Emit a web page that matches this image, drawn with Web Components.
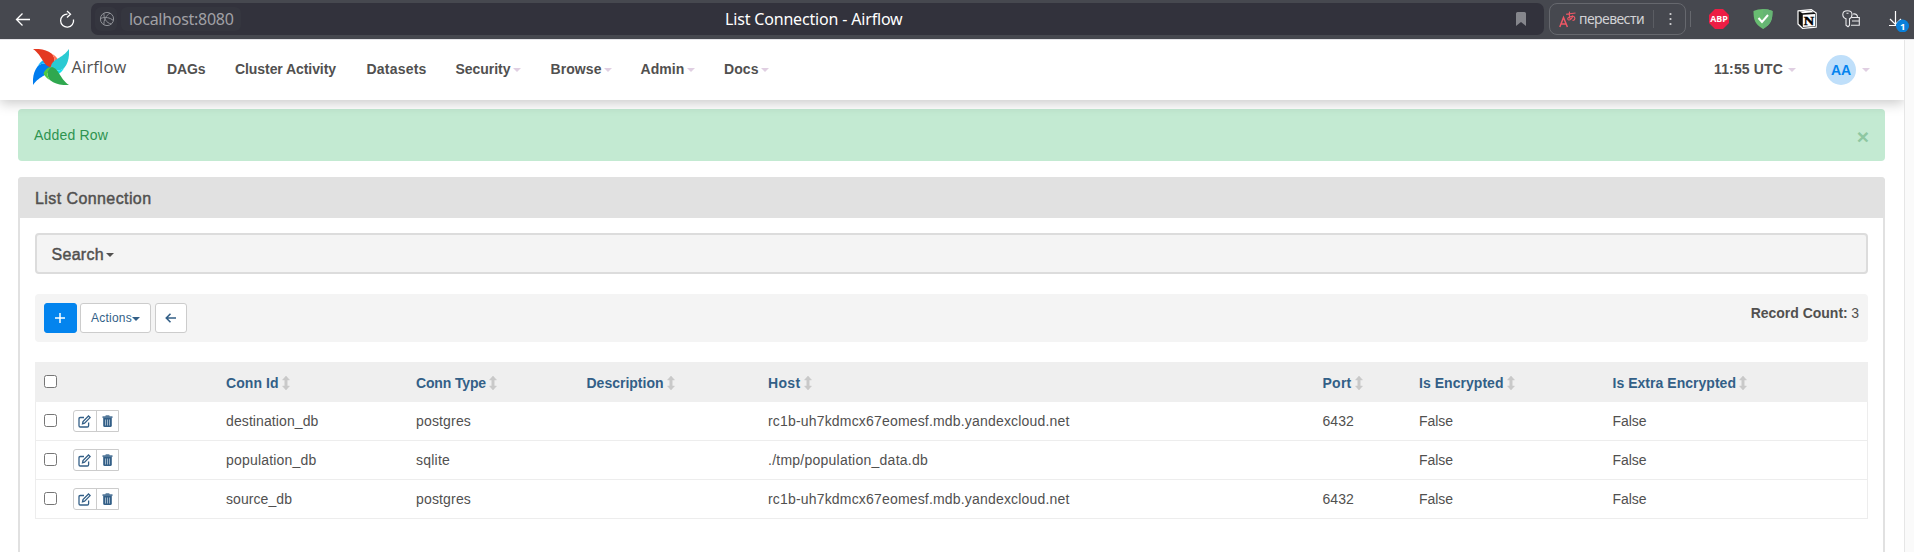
<!DOCTYPE html>
<html lang="en">
<head>
<meta charset="utf-8">
<title>List Connection - Airflow</title>
<style>
html,body{margin:0;height:100%;overflow:hidden;background:#fff}
body{font:14px/20px "Liberation Sans",Arial,sans-serif;color:#51504f}
</style>
</head>
<body>
<airflow-page></airflow-page>
<script>
const define = (name, html, setup) => {
  const t = document.createElement('template');
  t.innerHTML = html;
  customElements.define(name, class extends HTMLElement {
    connectedCallback() {
      if (this.shadowRoot) return;
      this.attachShadow({mode: 'open'}).append(t.content.cloneNode(true));
      if (setup) setup.call(this, this.shadowRoot);
    }
  });
};

/* Single-line text whose tracking is spread over a given width (attribute w). */
define('fit-text', `<style>:host{display:inline-block;white-space:nowrap;flex:none}span{display:inline-block}</style><span><slot></slot></span>`, function (r) {
  const w = +this.getAttribute('w'), s = r.querySelector('span');
  const n = this.textContent.length;
  if (!w || !n) return;
  s.style.letterSpacing = (w - s.getBoundingClientRect().width) / n + 'px';
  this.style.width = w + 'px';
});

define('caret-down', `<style>:host{display:block;flex:none;width:0;height:0;border:4px solid transparent;border-top-color:var(--caret,#e0cfe2);border-bottom:0}</style>`);

define('sort-icon', `<style>:host{display:block;flex:none}svg{display:block}</style>
<svg width="8" height="14" viewBox="0 0 8 14"><path d="M4 0 7.500 4H5.200v6h2.300L4 14 .5 10H2.800V4H.5z" fill="#c9c9c9" stroke="#c9c9c9" stroke-width=".5" stroke-linejoin="round"/></svg>`);

define('nav-item', `<style>:host{display:flex;align-items:center;flex:none}caret-down{margin-left:2.500px;margin-top:2px}:host(:not([menu])) caret-down{display:none}</style>
<slot></slot><caret-down></caret-down>`);

define('browser-bar', `<style>
:host{display:flex;align-items:center;height:38px;box-sizing:content-box;padding-bottom:1px;background:#46484f;border-bottom:1px solid #e4e4e8;font-family:"Noto Sans",sans-serif;font-size:16px}
svg{display:block;flex:none}
.nav{display:flex;width:91px;box-sizing:border-box;padding-left:15px;gap:28px;align-items:center}
.url{flex:none;width:1453px;height:32px;border-radius:7px;background:#32323c;display:grid;grid-template-columns:22px 120px 1fr 25px;align-items:center;box-sizing:border-box;padding-left:4px;column-gap:4px}
.chip{background:#35363f;border-radius:6px;height:24px;display:flex;align-items:center;box-sizing:border-box}
.globe{width:22px;justify-content:center}
.globe svg{margin-left:2px}
.host{color:#a1a1a6;padding-left:8px}
.title{color:#fff;padding-left:480px}
.tr{flex:none;margin-left:5px;width:137px;height:32px;box-sizing:border-box;border:1px solid #66686e;border-radius:8px;display:flex;align-items:center;padding-left:9px;font-size:14px;color:#d2d2d5}
.tr fit-text{margin-left:3px}
.tr i{width:1px;height:18px;background:#5b5d63;margin-left:9px}
.dots{margin-left:15px}
.sep{width:1px;height:16px;background:#66686e;margin-left:4px;flex:none}
.ext{display:grid;grid-template-columns:45px 43px 45px 47px 26px;margin-left:17px;align-items:center;flex:none}
.abp{font:bold 8.500px "Open Sans",sans-serif;fill:#fff}
</style>
<div class="nav">
<svg width="16" height="16" viewBox="0 0 16 16" fill="none" stroke="#fff" stroke-width="1.300"><path d="M15 8.500H1.500M7.500 2.500l-6 6 6 6"/></svg>
<svg width="16" height="19" viewBox="0 0 16 19" fill="none" stroke="#fff" stroke-width="1.300"><path d="M8.500 4.200A6.500 6.500 0 1 0 14.500 9.500M8 1l3.500 3.200L8 7.400"/></svg>
</div>
<div class="url">
<div class="chip globe"><svg width="16" height="16" viewBox="0 0 16 16" fill="none" stroke="#8f9197"><circle cx="8" cy="8" r="6.600"/><path d="M5 2.100C4.500 7 7 12 12.500 13M11 2.200C7 4.500 4.500 9 5 13.900M1.600 7.500C6 5.500 11 6.500 14.300 9.500"/></svg></div>
<div class="chip host"><fit-text w="104.500">localhost:8080</fit-text></div>
<div class="title"><fit-text w="177.500">List Connection - Airflow</fit-text></div>
<svg width="12" height="14" viewBox="0 0 12 14" style="margin-left:-4px"><path d="M1 1.500Q1 0 2.500 0h7Q11 0 11 1.500V14L6 10 1 14z" fill="#85868c"/></svg>
</div>
<div class="tr">
<svg width="17" height="17" viewBox="0 0 17 17" fill="none" stroke="#ef5765"><path stroke-width="1.500" d="M.8 16 4.500 6.500 8.400 16M2 13h5"/><path stroke-width="1.100" d="M7 3.300 16.500 2M10.500.6C10 4 10.500 7 11.500 9M14 4.500C13 7.500 11 9.500 9.300 8.800 7.500 8 10 5.200 13 5.200c3.700 0 3.700 3.800.5 4.300"/></svg>
<fit-text w="65">перевести</fit-text><i></i>
<svg class="dots" width="3" height="14" viewBox="0 0 3 14" fill="#d2d2d5"><circle cx="1.500" cy="2" r="1.100"/><circle cx="1.500" cy="7" r="1.100"/><circle cx="1.500" cy="12" r="1.100"/></svg>
</div>
<div class="sep"></div>
<div class="ext">
<svg width="22" height="20" viewBox="0 0 22 20"><path d="M7 0h8l6 6v8l-6 6H7l-6-6V6z" fill="#ed1e45"/><text class="abp" x="2.200" y="13" textLength="17.600" lengthAdjust="spacingAndGlyphs">ABP</text></svg>
<svg width="20" height="20" viewBox="0 0 20 20"><path d="M10 0c3 0 7 .8 9.500 2 0 8-1 13-9.500 18C1.500 15 .5 10 .5 2 3 .8 7 0 10 0z" fill="#68bc71"/><path d="M10 0c3 0 7 .8 9.500 2 0 8-1 13-9.500 18z" fill="#66b574"/><path d="m5.500 9 3.500 4 6-7" fill="none" stroke="#fff" stroke-width="2"/></svg>
<svg width="20" height="20" viewBox="0 0 20 20" style="margin-left:1px"><path d="M1 1.800 14.500.7l4.700 3.300V18.200L5.500 19.300 1 15z" fill="#111" stroke="#fff" stroke-width="1.200" stroke-linejoin="round"/><path d="M2.500 2.400 14.200 1.500 16.800 3.300 5.500 4.200z" fill="#fff"/><path d="M5.800 5.700 18 4.900V17.200L5.800 18z" fill="#fff"/><text x="6.800" y="16" font-family="Liberation Serif,serif" font-weight="700" font-size="13.500" textLength="10.400" lengthAdjust="spacingAndGlyphs" stroke="#000" stroke-width=".4">N</text></svg>
<svg width="19" height="18" viewBox="0 0 19 18" fill="none" stroke="#e9e9ec" stroke-width="1.100" style="margin-left:1px"><path d="M4 8.700C1.500 8 .8 6.500.8 4.500.8 2 2.500.8 5.500.8S10 2 10 4.500c0 2-.8 3.500-2.500 4.200v6.500L6 16.800l-2-1.600zM4.500 3.300h2M9.800 7.500h7.500v7.700H9M11 4Q15.500 3.300 15.500 7.500M10 11H17"/></svg>
<svg width="26" height="26" viewBox="0 0 26 26"><path d="M7.500 5v13M2 13l5.500 5.500 5.500-5.500M1 19.500h11" fill="none" stroke="#fff" stroke-width="1.200"/><circle cx="14.500" cy="20" r="6.500" fill="#0a80da"/><text x="12" y="23.500" font-size="9.500" font-weight="700" fill="#fff" font-family="Open Sans,sans-serif">1</text></svg>
</div>`);

/* The pinwheel is one blade (dark body, light fold) turned in quarter steps. */
const BLADES = [['#017cee', '#0cb6ff'], ['#e43921', '#ff7557'], ['#2bcad2', '#11e1ee'], ['#2fa84f', '#51c93f']].map(([body, fold], i) =>
  `<g transform="rotate(${i * 90} 18 18)"><path d="M0 36C-.5 28 1 22 4.500 17.500 8.500 13.500 14.500 13.500 18 18.500 16.500 26.500 7 26 0 36z" fill="${body}"/><path d="M4.500 17.500C6.500 14 9 11.500 11.500 10.500 15 12 18 14.500 18 18.500 14.500 13.500 8.500 13.500 4.500 17.500z" fill="${fold}"/></g>`).join('');

define('air-nav', `<style>
:host{display:flex;height:60px;box-sizing:border-box;padding-left:32px;align-items:center;background:#fff;box-shadow:0 3px 12px rgba(0,0,0,.22);clip-path:inset(0 0 -20px 0);position:relative;font-weight:700}
.brand{display:flex;align-items:center;width:135px;padding-bottom:6px;font:400 16.500px/20px "Open Sans",sans-serif;color:#51504f;flex:none}
.brand svg{margin:0 2.500px 0 1px}
.items{display:grid;grid-template-columns:68px 131.500px 89px 95px 90px 83.500px 60px;flex:1;padding-bottom:2px}
.user{display:flex;align-items:center;padding-right:34px}
.av{width:30px;height:30px;border-radius:50%;background:#bfdffa;color:#0684ef;display:grid;place-items:center;margin:0 6px 0 30px}
.clock{display:flex;align-items:center;padding-bottom:2px;gap:5px}
.clock caret-down{margin-top:2px}
</style>
<div class="brand"><svg width="36" height="36" viewBox="0 0 36 36">${BLADES}</svg><fit-text w="55">Airflow</fit-text></div>
<div class="items">
<nav-item><fit-text w="38.500">DAGs</fit-text></nav-item>
<nav-item><fit-text w="101">Cluster Activity</fit-text></nav-item>
<nav-item><fit-text w="60">Datasets</fit-text></nav-item>
<nav-item menu><fit-text w="55">Security</fit-text></nav-item>
<nav-item menu><fit-text w="51">Browse</fit-text></nav-item>
<nav-item menu><fit-text w="44">Admin</fit-text></nav-item>
<nav-item menu><fit-text w="34.500">Docs</fit-text></nav-item>
</div>
<div class="user"><div class="clock"><fit-text w="69">11:55 UTC</fit-text><caret-down></caret-down></div><div class="av"><fit-text w="20">AA</fit-text></div><caret-down></caret-down></div>`);

define('flash-alert', `<style>
:host{display:flex;justify-content:space-between;height:52px;box-sizing:border-box;padding:16px 16px 0 16px;border-radius:4px;background:#c3ead2;color:#2e9450}
b{font-size:21px;line-height:20px;margin-top:2px;color:#8ec7a1}
</style><slot></slot><b>×</b>`);

define('search-box', `<style>
:host{display:flex;align-items:center;height:41px;box-sizing:border-box;border:2px solid #dcdcdc;border-radius:4px;background:#f4f4f4;padding:2px 0 0 14.500px;font-size:16px;-webkit-text-stroke:.45px #51504f}
caret-down{--caret:#51504f;margin-left:2px;margin-top:1px}
</style><slot></slot><caret-down></caret-down>`);

define('action-bar', `<style>
:host{display:flex;height:48px;box-sizing:border-box;background:#f4f4f4;border-radius:4px;padding:9px 9px 0 9px}
.b{height:30px;box-sizing:border-box;border:1px solid #ccc;border-radius:3px;background:#fff;display:flex;align-items:center;justify-content:center;color:#335f87;font-size:12px}
.add{width:33px;background:#0384ee;border-color:#0384ee;margin-right:3px;padding:0 1px 1px 0}
.act{width:71px;margin-right:4px}
.back{width:32px;padding:0 1px 1px 0}
caret-down{--caret:#335f87;margin-top:2px}
.count{margin-left:auto;display:flex;gap:3.500px}
</style>
<div class="b add"><svg width="12" height="12" viewBox="0 0 12 12" stroke="#fff" stroke-width="1.500"><path d="M6 1v10M1 6h10"/></svg></div>
<div class="b act"><fit-text w="41">Actions</fit-text><caret-down></caret-down></div>
<div class="b back"><svg width="12" height="12" viewBox="0 0 12 12" fill="none" stroke="#335f87" stroke-width="1.600"><path d="M11 6H1.500M5.500 1.800 1.300 6l4.200 4.200"/></svg></div>
<div class="count"><fit-text w="97" style="font-weight:700">Record Count:</fit-text><span>3</span></div>`);

const GRID = 'display:grid;grid-template-columns:38px 144px 190px 170.500px 181.500px 554.500px 96.500px 193.500px 1fr;align-items:center;box-sizing:border-box;';
const CHECK = '<i class="check"></i>';
const CHECK_CSS = '.check{width:13px;height:13px;box-sizing:border-box;border:1px solid #767676;border-radius:2.500px;background:#fff;display:block}';

define('conn-head', `<style>:host{${GRID}height:40px;background:#efefef;padding:2px 0 0 9px;color:#335f87;font-weight:700}
${CHECK_CSS}.check{margin-top:-3px}div{display:flex;align-items:center;gap:3px}sort-icon{margin-top:-1px}</style>${CHECK}<span></span>`, function (r) {
  for (const [name, w] of [['Conn Id', 52.5], ['Conn Type', 70], ['Description', 77], ['Host', 32.5], ['Port', 29], ['Is Encrypted', 84.5], ['Is Extra Encrypted', 123.5]]) {
    const d = document.createElement('div');
    d.innerHTML = `<fit-text w="${w}">${name}</fit-text><sort-icon></sort-icon>`;
    r.append(d);
  }
});

define('conn-row', `<style>:host{${GRID}height:39px;border:1px solid #ededed;border-top:0;padding-left:8px;color:#51504f}
${CHECK_CSS}.check{margin-top:-1px}
.g{display:flex;width:46px;height:22px;box-sizing:border-box;border:1px solid #ccc;border-radius:3px 0 0 3px;margin-left:-9px;background:#fff}
.g span{display:grid;place-items:center;flex:1}.g span+span{border-left:1px solid #ccc}.g svg{display:block}</style>
${CHECK}<div class="g"><span><svg width="13" height="13" viewBox="0 0 13 13" fill="none" stroke="#335f87" stroke-width="1.300"><path d="M6 2.500H2.300Q1 2.500 1 3.800v7Q1 12 2.300 12h7Q10.600 12 10.600 10.700V7.500M4.500 8.800l.5-2.300L10.500 1l1.600 1.600-5.500 5.600z"/></svg></span>
<span><svg width="11" height="12" viewBox="0 0 11 12"><path d="M.5 1.200H3.300L3.800.2h3.400l.5 1h2.800V3H.5z" fill="#54799b"/><path d="M1.200 3h8.600v7.500Q9.800 12 8.400 12H2.600Q1.200 12 1.200 10.500z" fill="#335f87"/><path d="M3.500 4.500v6M5.500 4.500v6M7.500 4.500v6" stroke="#b9cad9" stroke-width=".8"/></svg></span></div>`, function (r) {
  for (const cell of this.getAttribute('cells').split('|')) {
    const [text, w] = cell.split('@');
    const d = document.createElement('div');
    if (text) d.innerHTML = `<fit-text w="${w}">${text}</fit-text>`;
    r.append(d);
  }
});

define('list-panel', `<style>
:host{display:block;height:420px;box-sizing:border-box;border:2px solid #e1e1e1;border-top:0;border-radius:4px}
.h{height:41px;box-sizing:border-box;margin:0 -2px;background:#e1e1e1;border-radius:4px 4px 0 0;padding:11.500px 0 0 17px;font-size:16px;-webkit-text-stroke:.45px #51504f}
.body{padding:15px 15px 0;display:flex;flex-direction:column;gap:20px}
</style><div class="h"><slot name="title"></slot></div><div class="body"><slot></slot></div>`);

define('airflow-page', `<style>
:host{display:block;height:552px;overflow:hidden}
.view{display:grid;grid-template-columns:1904px 1fr;height:512px}
.bar{background:#fafafa;border-left:1px solid #e6e6e6}
main{padding:9px 19px 0 18px;display:flex;flex-direction:column;gap:16px}
</style>
<browser-bar></browser-bar>
<div class="view"><div><air-nav></air-nav><main>
<flash-alert><fit-text w="74">Added Row</fit-text></flash-alert>
<list-panel><fit-text slot="title" w="116.500">List Connection</fit-text>
<search-box><fit-text w="52.500">Search</fit-text></search-box>
<action-bar></action-bar>
<div>
<conn-head></conn-head>
<conn-row cells="destination_db@92.5|postgres@55||rc1b-uh7kdmcx67eomesf.mdb.yandexcloud.net@301.5|6432@31.500|False@34|False@34"></conn-row>
<conn-row cells="population_db@90.5|sqlite@34||./tmp/population_data.db@160||False@34|False@34"></conn-row>
<conn-row cells="source_db@66|postgres@55||rc1b-uh7kdmcx67eomesf.mdb.yandexcloud.net@301.5|6432@31.500|False@34|False@34"></conn-row>
</div>
</list-panel>
</main></div><div class="bar"></div></div>`);
</script>
</body>
</html>
